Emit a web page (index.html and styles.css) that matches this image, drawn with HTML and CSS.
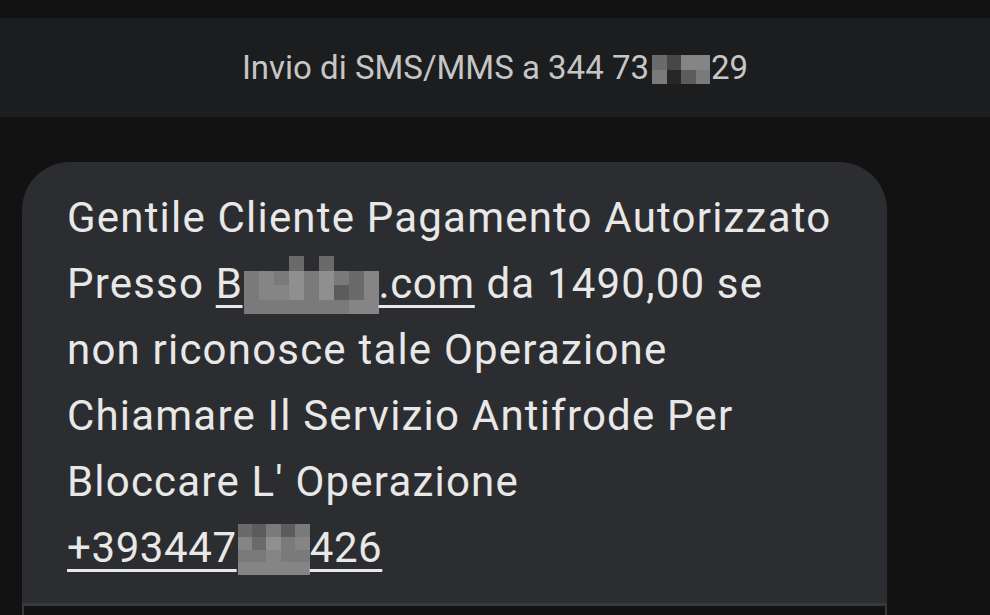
FILE: index.html
```html
<!DOCTYPE html>
<html lang="it">
<head>
    <meta charset="UTF-8">
    <meta name="viewport" content="width=device-width, initial-scale=1.0">
    <title>Messaggi</title>
    <link rel="stylesheet" href="styles.css">
</head>
<body>
<div class="status_strip"></div>
<div class="thread-header">
    <span class="thread-title">Invio di SMS/MMS a 344 73<span class="mosaic mosaic-head"><span class="mosaic-grid"><i class="g3"></i><i class="g1"></i><i class="g5"></i><i class="g5"></i><i class="g4"></i><i class="g0"></i><i class="g2"></i><i class="g4"></i></span></span>29</span>
</div>

<div class="thread">
    <div class="bubble">
        <p class="bubble-text">Gentile Cliente Pagamento Autorizzato<br>Presso <a class="link">B<span class="mosaic mosaic-site"><span class="mosaic-grid"><i></i><i></i><i></i><i class="g3"></i><i></i><i class="g3"></i><i></i><i></i><i></i><i class="g4"></i><i class="g5"></i><i class="g4"></i><i class="g6"></i><i class="g4"></i><i class="g6"></i><i class="g4"></i><i class="g3"></i><i class="g5"></i><i class="g4"></i><i class="g5"></i><i class="g5"></i><i class="g6"></i><i class="g4"></i><i class="g6"></i><i class="g2"></i><i class="g3"></i><i class="g5"></i><i class="g4"></i><i class="g4"></i><i class="g4"></i><i class="g4"></i><i class="g4"></i><i class="g4"></i><i class="g4"></i><i class="g5"></i><i class="g5"></i></span></span>.com</a> da 1490,00 se<br>non riconosce tale Operazione<br>Chiamare Il Servizio Antifrode Per<br>Bloccare L' Operazione<br><a class="link">+393447<span class="mosaic mosaic-phone"><span class="mosaic-grid"><i class="g3"></i><i class="g2"></i><i class="g4"></i><i class="g2"></i><i class="g4"></i><i class="g5"></i><i class="g3"></i><i class="g6"></i><i class="g4"></i><i class="g5"></i><i class="g4"></i><i class="g4"></i><i class="g5"></i><i class="g4"></i><i class="g4"></i><i class="g5"></i><i class="g5"></i><i class="g5"></i><i class="g5"></i><i class="g5"></i></span></span>426</a></p>
    </div>
    <div class="reply-box"></div>
</div>
</body>
</html>
```

FILE: styles.css
```css
html, body {
    margin: 0;
    padding: 0;
    height: 100%;
    overflow: hidden;
}

body {
    font-family: Roboto, 'Liberation Sans', sans-serif;
    background-color: #121212;
    color: #e8e8e8;
}

.status_strip {
    height: 18px;
    background-color: #111111;
}

.thread-header {
    height: 99px;
    background-color: #1c1d1e;
    display: flex;
    align-items: center;
    justify-content: center;
}

.thread-title {
    font-size: 33px;
    color: #c6c6c6;
    white-space: nowrap;
}

.thread {
    padding: 45px 0 0 22px;
    width: 865px;
}

.bubble {
    background-color: #2c2d30;
    border-radius: 48px 48px 0 0;
    padding: 23px 40px 22px 45px;
}

.bubble-text {
    margin: 0;
    font-size: 42px;
    line-height: 66px;
    letter-spacing: 1.2px;
    white-space: nowrap;
}

.link {
    color: #e8e8e8;
    text-decoration: underline;
    text-decoration-thickness: 3px;
    text-underline-offset: 7px;
    letter-spacing: 0.6px;
}

/* pixelated parts of the screenshot */
.mosaic {
    display: inline-block;
    overflow: hidden;
    letter-spacing: 0;
}

.mosaic-grid {
    display: grid;
    width: 100%;
    height: 100%;
}

.mosaic i {
    display: block;
}

.mosaic-head {
    width: 58px;
    height: 29px;
    vertical-align: -5px;
    margin: 0 1px 0 3px;
}

.mosaic-head .mosaic-grid {
    grid-template-columns: repeat(4, 1fr);
    grid-template-rows: repeat(2, 1fr);
}

.mosaic-site {
    width: 135px;
    height: 58px;
    vertical-align: -16px;
    margin-left: 1px;
}

.mosaic-site .mosaic-grid {
    grid-template-columns: repeat(9, 1fr);
    grid-template-rows: repeat(4, 1fr);
}

.mosaic-phone {
    width: 72px;
    height: 51px;
    vertical-align: -13px;
    margin-left: 1px;
}

.mosaic-phone .mosaic-grid {
    grid-template-columns: repeat(5, 1fr);
    grid-template-rows: repeat(4, 1fr);
}

.g0 { background-color: #262626; }
.g1 { background-color: #474747; }
.g2 { background-color: #5c5c5c; }
.g3 { background-color: #6a6a6a; }
.g4 { background-color: #7a7a7a; }
.g5 { background-color: #858585; }
.g6 { background-color: #8f8f8f; }

.reply-box {
    height: 40px;
    background-color: #121212;
    border: 2px solid #38393b;
    border-top-width: 3px;
}
```
